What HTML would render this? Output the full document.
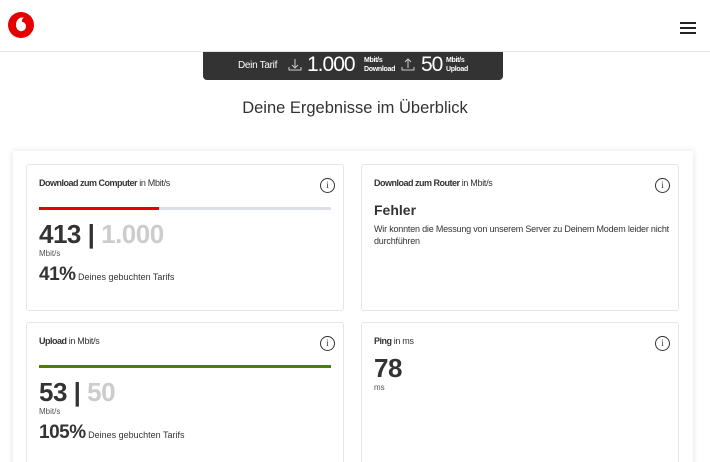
<!DOCTYPE html>
<html><head><meta charset="utf-8"><style>
*{margin:0;padding:0;box-sizing:border-box}
html,body{width:710px;height:462px;overflow:hidden}
body{background:#fff;font-family:"Liberation Sans",sans-serif;color:#333;position:relative}
.abs{position:absolute}
.hdr{left:0;top:0;width:710px;height:52px;border-bottom:1px solid #e6e6e6}
.bar{left:203px;top:52px;width:300px;height:28px;background:#333;border-radius:0 0 4px 4px;color:#fff}
.title{left:0;width:710px;top:99px;text-align:center;font-size:16.5px;color:#333}
.outer{left:13px;top:151px;width:680px;height:330px;box-shadow:0 0 6px rgba(0,0,0,.12);background:#fff}
.card{position:absolute;width:318px;border:1px solid #e3e6ea;border-radius:3px;background:#fff}
.ct{position:absolute;left:12px;top:13px;font-size:9px;color:#333;letter-spacing:-0.3px}
.ct b{letter-spacing:-0.5px}
.info{position:absolute;right:8px;top:13px;width:15px;height:15px;border:1.2px solid #333;border-radius:50%;font-size:9px;text-align:center;line-height:13px;font-family:"Liberation Serif",serif}
.big{position:absolute;left:12px;font-size:26px;font-weight:bold;color:#333;letter-spacing:-0.5px}
.big span{color:#ccc}
.unit{position:absolute;left:12px;font-size:8px;color:#555}
.pct{position:absolute;left:12px;font-size:9px;color:#333}
.pct b{font-size:19px;letter-spacing:-0.5px}
</style></head><body>
<div class="abs hdr"></div>
<svg class="abs" style="left:8px;top:12px" width="26" height="26" viewBox="0 0 26 26"><circle cx="13" cy="13" r="13" fill="#e60000"/><path d="M13.5 5.5c-3 .5-5.5 3.2-5.5 7.5 0 3.6 2.4 6.2 5.2 6.2 2.8 0 4.8-2.2 4.8-4.9 0-3.1-2.3-4.3-4.2-4.7 0-2 1-3.4 2.2-4.1z" fill="#fff"/></svg>
<div class="abs" style="left:680px;top:22px;width:16px;height:2px;background:#222"></div>
<div class="abs" style="left:680px;top:27px;width:16px;height:2px;background:#222"></div>
<div class="abs" style="left:680px;top:32px;width:16px;height:2px;background:#222"></div>
<div class="abs bar">
<div class="abs" style="left:35px;top:8px;font-size:10px;letter-spacing:-0.3px">Dein Tarif</div>
<svg class="abs" style="left:85px;top:6px" width="14" height="14" viewBox="0 0 14 14" fill="none" stroke="#ccc" stroke-width="1"><path d="M7 1v9M4 7l3 3 3-3M1 9v3h12V9"/></svg>
<div class="abs" style="left:104px;top:1px;font-size:21px;letter-spacing:-1px">1.000</div>
<div class="abs" style="left:161px;top:4px;font-size:7px;font-weight:bold;line-height:9px;letter-spacing:-0.3px">Mbit/s<br>Download</div>
<svg class="abs" style="left:198px;top:6px" width="14" height="14" viewBox="0 0 14 14" fill="none" stroke="#ccc" stroke-width="1"><path d="M7 10V1M4 4l3-3 3 3M1 9v3h12V9"/></svg>
<div class="abs" style="left:218px;top:1px;font-size:21px;letter-spacing:-1px">50</div>
<div class="abs" style="left:243px;top:4px;font-size:7px;font-weight:bold;line-height:9px;letter-spacing:-0.3px">Mbit/s<br>Upload</div>
</div>
<div class="abs title">Deine Ergebnisse im Überblick</div>
<div class="abs outer"></div>
<div class="card" style="left:26px;top:164px;height:147px">
<div class="ct"><b>Download zum Computer</b> in Mbit/s</div><div class="info">i</div>
<div class="abs" style="left:12px;top:42px;width:292px;height:3px;background:#dcdfe6"></div>
<div class="abs" style="left:12px;top:42px;width:120px;height:3px;background:#e60000"></div>
<div class="big" style="top:54px">413 | <span>1.000</span></div>
<div class="unit" style="top:84px">Mbit/s</div>
<div class="pct" style="top:99px"><b>41%</b> Deines gebuchten Tarifs</div>
</div>
<div class="card" style="left:361px;top:164px;height:147px">
<div class="ct"><b>Download zum Router</b> in Mbit/s</div><div class="info">i</div>
<div class="abs" style="left:12px;top:37px;font-size:14px;font-weight:bold">Fehler</div>
<div class="abs" style="left:12px;top:58px;font-size:9px;line-height:12px;width:295px;letter-spacing:-0.2px">Wir konnten die Messung von unserem Server zu Deinem Modem leider nicht durchführen</div>
</div>
<div class="card" style="left:26px;top:322px;height:150px">
<div class="ct"><b>Upload</b> in Mbit/s</div><div class="info">i</div>
<div class="abs" style="left:12px;top:42px;width:292px;height:3px;background:#4a7f00"></div>
<div class="big" style="top:54px">53 | <span>50</span></div>
<div class="unit" style="top:84px">Mbit/s</div>
<div class="pct" style="top:99px"><b>105%</b> Deines gebuchten Tarifs</div>
</div>
<div class="card" style="left:361px;top:322px;height:150px">
<div class="ct"><b>Ping</b> in ms</div><div class="info">i</div>
<div class="big" style="top:30px">78</div>
<div class="unit" style="top:60px">ms</div>
</div>
</body></html>
